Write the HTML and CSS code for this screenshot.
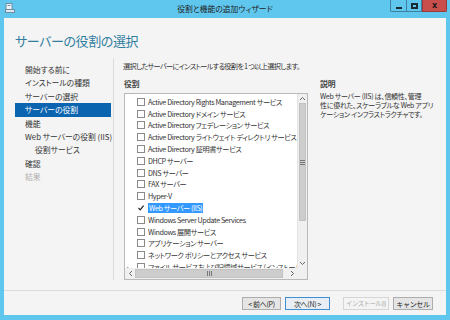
FILE: index.html
```html
<!DOCTYPE html>
<html lang="ja">

<head>
  <meta charset="UTF-8" />
  <title>役割と機能の追加ウィザード</title>
  <link rel="stylesheet" href="styles.css">
</head>

<body>
  <div class="window">
    <div class="titlebar">
      <div class="app-icon">
        <svg width="10" height="10" viewBox="0 0 10 10">
          <rect x="1" y="0.5" width="6" height="6" fill="#eef6fb" stroke="#6f8ea3" stroke-width="1" />
          <rect x="2.5" y="2" width="3" height="1" fill="#6f8ea3" />
          <rect x="0.5" y="6.5" width="9" height="3" fill="#dbe8f0" stroke="#6f8ea3" stroke-width="1" />
        </svg>
      </div>
      <div class="caption">役割と機能の追加ウィザード</div>
      <div class="controls">
        <span class="ctl min"><i></i></span>
        <span class="ctl max"><i></i></span>
        <span class="ctl close">x</span>
      </div>
    </div>

    <div class="client">
      <h1>サーバーの役割の選択</h1>

      <div class="body">
        <ul class="nav">
          <li>開始する前に</li>
          <li>インストールの種類</li>
          <li>サーバーの選択</li>
          <li class="active">サーバーの役割</li>
          <li>機能</li>
          <li>Web サーバーの役割 (IIS)</li>
          <li class="sub">役割サービス</li>
          <li>確認</li>
          <li class="disabled">結果</li>
        </ul>

        <div class="main">
          <p class="lead">選択したサーバーにインストールする役割を 1 つ以上選択します。</p>

          <div class="columns">
            <div class="roles">
              <div class="label">役割</div>
              <div class="listbox">
                <ul class="items">
                  <li><span class="tw"></span><span class="cb"></span>Active Directory Rights Management サービス</li>
                  <li><span class="tw"></span><span class="cb"></span>Active Directory ドメイン サービス</li>
                  <li><span class="tw"></span><span class="cb"></span>Active Directory フェデレーション サービス</li>
                  <li><span class="tw"></span><span class="cb"></span>Active Directory ライトウェイト ディレクトリ サービス</li>
                  <li><span class="tw"></span><span class="cb"></span>Active Directory 証明書サービス</li>
                  <li><span class="tw"></span><span class="cb"></span>DHCP サーバー</li>
                  <li><span class="tw"></span><span class="cb"></span>DNS サーバー</li>
                  <li><span class="tw"></span><span class="cb"></span>FAX サーバー</li>
                  <li><span class="tw"></span><span class="cb"></span>Hyper-V</li>
                  <li><span class="tw"></span><span class="cb checked"><svg width="8" height="8" viewBox="0 0 8 8"><path d="M1.5 4 L3.2 5.8 L6.6 1.6" fill="none" stroke="#222" stroke-width="1.2" /></svg></span><span class="sel">Web サーバー (IIS)</span></li>
                  <li><span class="tw"></span><span class="cb"></span>Windows Server Update Services</li>
                  <li><span class="tw"></span><span class="cb"></span>Windows 展開サービス</li>
                  <li><span class="tw"></span><span class="cb"></span>アプリケーション サーバー</li>
                  <li><span class="tw"></span><span class="cb"></span>ネットワーク ポリシーとアクセス サービス</li>
                  <li><span class="tw">▸</span><span class="cb"></span>ファイル サービスおよび記憶域サービス (インストール済み)</li>
                </ul>
                <div class="vscroll">
                  <span class="arrow"><svg width="7" height="5" viewBox="0 0 7 5"><path d="M1 4 L3.5 1.5 L6 4" fill="none" stroke="#666" stroke-width="1" /></svg></span>
                  <span class="thumb v"><svg width="5" height="5" viewBox="0 0 5 5"><path d="M0 0.5 H5 M0 2.5 H5 M0 4.5 H5" stroke="#777" stroke-width="1" /></svg></span>
                  <span class="track"></span>
                  <span class="arrow"><svg width="7" height="5" viewBox="0 0 7 5"><path d="M1 1 L3.5 3.5 L6 1" fill="none" stroke="#666" stroke-width="1" /></svg></span>
                </div>
                <div class="hscroll">
                  <span class="arrow"><svg width="5" height="7" viewBox="0 0 5 7"><path d="M4 1 L1.5 3.5 L4 6" fill="none" stroke="#666" stroke-width="1" /></svg></span>
                  <span class="thumb h"><svg width="5" height="5" viewBox="0 0 5 5"><path d="M0.5 0 V5 M2.5 0 V5 M4.5 0 V5" stroke="#777" stroke-width="1" /></svg></span>
                  <span class="track"></span>
                  <span class="arrow"><svg width="5" height="7" viewBox="0 0 5 7"><path d="M1 1 L3.5 3.5 L1 6" fill="none" stroke="#666" stroke-width="1" /></svg></span>
                </div>
                <div class="corner"></div>
              </div>
            </div>

            <div class="desc">
              <div class="label">説明</div>
              <p>Web サーバー (IIS) は、信頼性、管理<br>性に優れた、スケーラブルな Web アプリ<br>ケーション インフラストラクチャです。</p>
            </div>
          </div>
        </div>
      </div>

      <div class="footer">
        <button>&lt; 前へ(P)</button>
        <button class="default">次へ(N) &gt;</button>
        <button class="install" disabled>インストール(I)</button>
        <button class="cancel">キャンセル</button>
      </div>
    </div>
  </div>
</body>

</html>
```

FILE: styles.css
```css
* {
  box-sizing: border-box;
}

body {
  margin: 0;
  width: 450px;
  height: 320px;
  overflow: hidden;
  background: #5fc6ee;
  font-family: "Noto Sans CJK JP", sans-serif;
  font-feature-settings: "palt";
  font-size: 7.8px;
  color: #333;
}

.window {
  display: flex;
  flex-direction: column;
  height: 320px;
}

/* title bar */
.titlebar {
  height: 18px;
  display: grid;
  grid-template-columns: 1fr auto 1fr;
  align-items: start;
}

.app-icon {
  padding: 3px 0 0 5px;
  height: 18px;
}

.caption {
  line-height: 18px;
  font-size: 7.8px;
  color: #222;
}

.controls {
  justify-self: end;
  display: flex;
  padding-right: 3px;
}

.ctl {
  width: 16px;
  height: 12px;
  display: flex;
  align-items: center;
  justify-content: center;
  border: 1px solid #3f7f9f;
  border-top: none;
}

.ctl.min {
  border-right: none;
  border-radius: 0 0 0 2px;
}

.ctl.min i {
  width: 6px;
  height: 2px;
  margin-top: 4px;
  background: #1c2b33;
}

.ctl.max i {
  width: 7px;
  height: 6px;
  border: 2px solid #1c2b33;
}

.ctl.close {
  width: 25px;
  background: #c84f4c;
  border-color: #9b3a38;
  border-radius: 0 0 2px 0;
  color: #1a1a1a;
  font-weight: bold;
  font-family: "DejaVu Sans", sans-serif;
  font-size: 8px;
}

/* client area */
.client {
  margin: 0 4px;
  height: 297px;
  background: #f4f4f4;
}

h1 {
  margin: 0;
  padding: 14px 0 8px 11px;
  line-height: 18px;
  font-size: 13px;
  letter-spacing: -0.4px;
  font-weight: normal;
  color: #317e9f;
}

.body {
  display: flex;
  height: 222px;
}

.nav {
  list-style: none;
  margin: 0;
  padding: 5px 2px 0 11px;
  width: 110px;
  border-right: 1px solid #dcdcdc;
}

.nav li {
  height: 13.4px;
  line-height: 13.4px;
  padding-left: 10px;
  white-space: nowrap;
}

.nav li.sub {
  padding-left: 20px;
}

.nav li.active {
  background: #0b64b0;
  color: #fff;
}

.nav li.disabled {
  color: #b0b0b0;
}

.main {
  flex: 1;
  padding: 3px 0 0 9px;
}

.lead {
  margin: 0;
  line-height: 10px;
  font-size: 7.2px;
  letter-spacing: -0.7px;
  white-space: nowrap;
}

.columns {
  display: flex;
  gap: 12px;
  margin-top: 8px;
  padding-left: 1px;
}

.label {
  line-height: 10px;
  font-weight: bold;
  color: #444;
}

/* role list */
.listbox {
  margin-top: 4px;
  width: 184px;
  height: 187px;
  border: 1px solid #b9b9b9;
  background: #fff;
  display: grid;
  grid-template-columns: 1fr 10px;
  grid-template-rows: 1fr 11px;
}

.items {
  list-style: none;
  margin: 0;
  padding: 2px 0 0 2px;
  overflow: hidden;
  font-size: 7.2px;
  letter-spacing: -0.4px;
}

.items li {
  height: 11.8px;
  display: flex;
  align-items: center;
  white-space: nowrap;
}

.tw {
  flex: none;
  width: 10px;
  font-size: 6px;
  color: #777;
}

.cb {
  width: 8px;
  height: 8px;
  border: 1px solid #8a8a8a;
  background: #fff;
  margin-right: 3px;
  flex: none;
  display: flex;
}

.cb.checked {
  border: none;
}

.sel {
  background: #3399ff;
  color: #fff;
  padding: 0 1px;
  line-height: 10px;
}

.vscroll,
.hscroll {
  display: flex;
  background: #f0f0f0;
}

.vscroll {
  flex-direction: column;
  border-left: 1px solid #e4e4e4;
}

.arrow {
  flex: none;
  display: flex;
  align-items: center;
  justify-content: center;
}

.vscroll .arrow {
  height: 9px;
}

.hscroll .arrow {
  width: 10px;
}

.thumb {
  flex: none;
  background: #cdcdcd;
  border: 1px solid #c2c2c2;
  display: flex;
  align-items: center;
  justify-content: center;
}

.thumb.v {
  height: 118px;
  margin: 0 1px;
}

.thumb.h {
  width: 148px;
  margin: 1px 0;
}

.track {
  flex: 1;
}

.corner {
  background: #f0f0f0;
}

/* description */
.desc p {
  margin: 3px 0 0;
  line-height: 9px;
  font-size: 7px;
  letter-spacing: -0.3px;
  white-space: nowrap;
}

/* footer */
.footer {
  margin-top: 10px;
  border-top: 1px solid #dcdcdc;
  padding: 6px 13px 0 0;
  display: flex;
  justify-content: flex-end;
  gap: 4px;
}

button {
  height: 13px;
  padding: 0;
  font-family: inherit;
  font-size: 7px;
  letter-spacing: -0.3px;
  white-space: nowrap;
  color: #222;
  background: #e5e5e5;
  border: 1px solid #adadad;
  width: 39px;
}

button.default {
  width: 45px;
  border-color: #3c8fd2;
  background: #e8eef3;
}

button.install {
  width: 46px;
  margin-left: 9px;
  font-size: 6.4px;
  letter-spacing: -0.5px;
  color: #a8a8a8;
  background: #f4f4f4;
  border-color: #d5d5d5;
}

button.cancel {
  width: 40px;
}
```
